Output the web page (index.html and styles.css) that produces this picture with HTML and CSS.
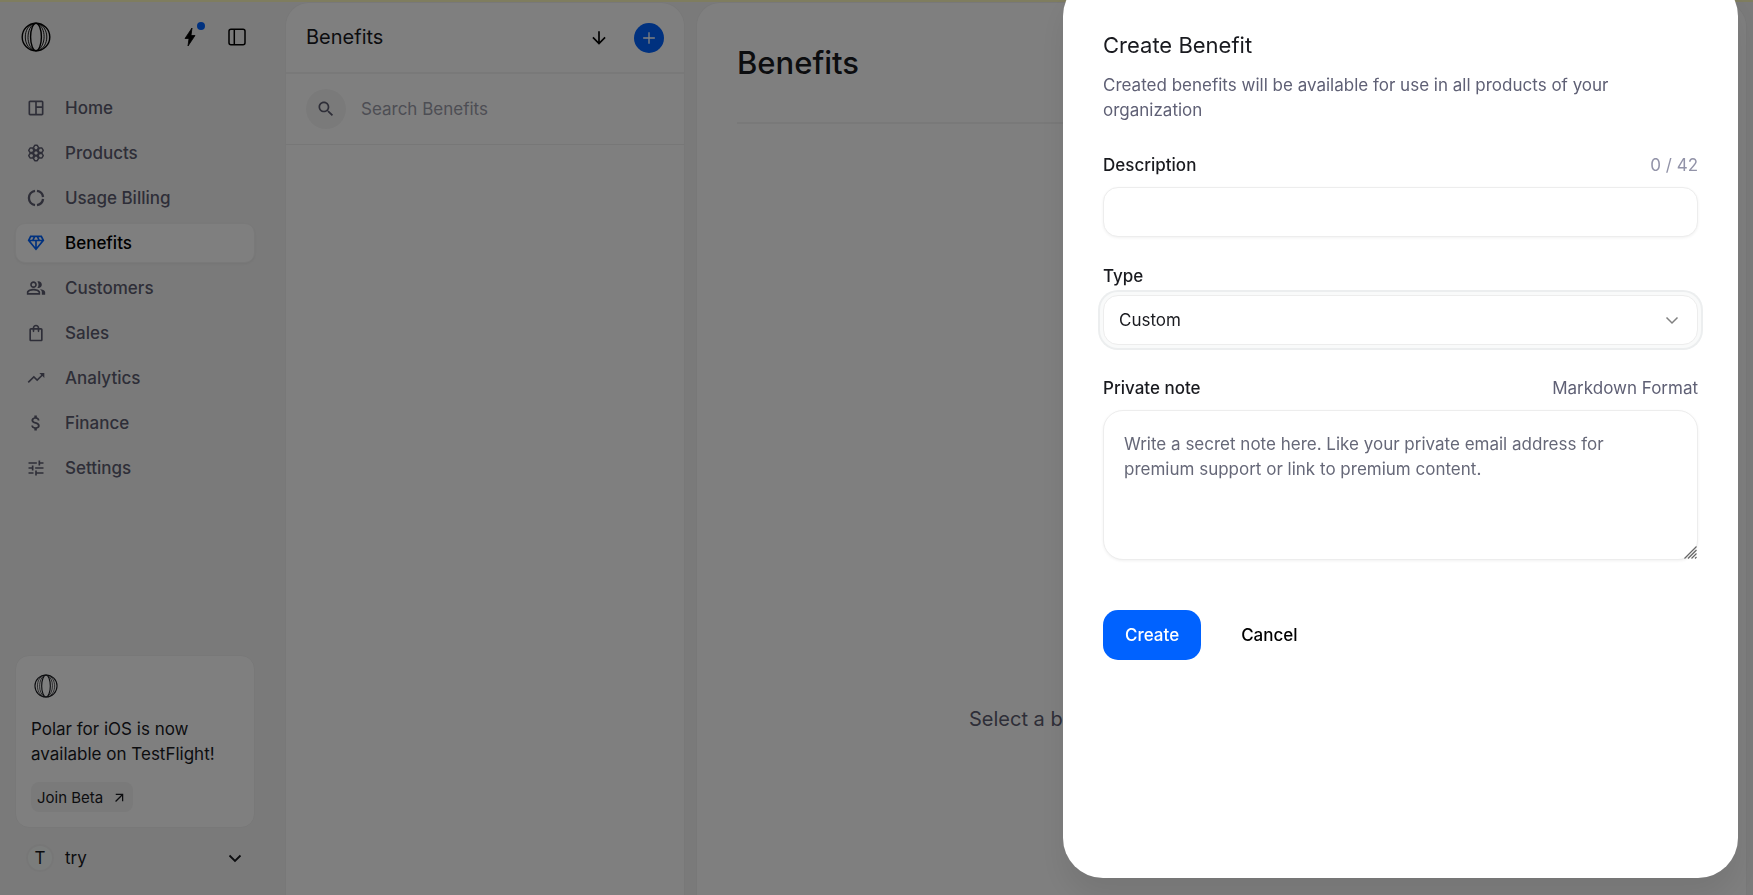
FILE: index.html
```html
<!DOCTYPE html>
<html lang="en">
<head>
<meta charset="utf-8">
<title>Benefits</title>
<link rel="stylesheet" href="styles.css">
</head>
<body>
<svg class="defs" aria-hidden="true">
  <symbol id="logo" viewBox="0 0 30 30">
    <g fill="none" stroke="currentColor">
      <circle cx="15" cy="15" r="13.8" stroke-width="1.4"/>
      <ellipse cx="15" cy="15" rx="5.4" ry="13.8" stroke-width="1.4"/>
      <path d="M12.500 1.600C7 3.500 4.300 9 4.300 15c0 5.500 2.400 11 8 13.500M13.500 1.300C9.500 3.500 7 9 7 15.500c0 5 2 10.500 6 12.900M17.500 1.500c5.500 2 8.300 8 8.300 13.500 0 6-3 11.600-8.300 13.600M17 1.600c3.800 2.400 6.100 7.400 6.100 13 0 6-2.500 11.500-6.500 14" stroke-width=".9"/>
    </g>
  </symbol>
</svg>
<div class="app">
  <nav class="sidebar">
    <div class="brand">
      <svg class="logo"><use href="#logo"/></svg>
      <div class="brand-actions">
        <button class="icon-button" aria-label="Notifications"><svg class="icon" viewBox="0 0 20 20"><path fill="currentColor" stroke="currentColor" stroke-width=".8" stroke-linejoin="round" d="M12 1 5 11.500h4L8 19l7-10.500h-4L12 1z"/></svg><span class="dot"></span></button>
        <button class="icon-button" aria-label="Toggle sidebar"><svg class="icon" viewBox="0 0 20 20" fill="none" stroke="currentColor" stroke-width="1.500"><rect x="2" y="2.300" width="16" height="15.500" rx="2"/><path d="M7.300 2.300v15.500"/></svg></button>
      </div>
    </div>
    <ul class="nav">
      <li><a href="#"><svg class="icon" viewBox="0 0 24 24"><path fill="currentColor" d="M19 3H5c-1.100 0-2 .9-2 2v14c0 1.100.9 2 2 2h14c1.100 0 2-.9 2-2V5c0-1.100-.9-2-2-2zM5 19V5h6v14H5zm14 0h-6v-7h6v7zm0-9h-6V5h6v5z"/></svg>Home</a></li>
      <li><a href="#"><svg class="icon" viewBox="0 0 24 24" fill="none" stroke="currentColor" stroke-width="1.800" stroke-linejoin="round"><path d="M10.500 2.800h3L15.100 5.500l-1.600 2.800h-3L8.900 5.500zM10.500 9.200h3l1.600 2.800-1.600 2.800h-3L8.900 12zM10.500 15.700h3l1.600 2.800-1.600 2.700h-3l-1.600-2.700zM4.900 6h3l1.600 2.800-1.600 2.700h-3L3.300 8.800zM4.900 12.500h3l1.600 2.700L7.900 18h-3l-1.600-2.800zM16.100 6h3l1.600 2.800-1.600 2.700h-3l-1.600-2.700zM16.100 12.500h3l1.600 2.700-1.600 2.800h-3l-1.600-2.800z"/></svg>Products</a></li>
      <li><a href="#"><svg class="icon" viewBox="0 0 24 24" fill="none" stroke="currentColor" stroke-width="2.800"><path d="M13.200 3.500a8.700 8.700 0 0 1 7.300 7.300M20.500 13.200a8.700 8.700 0 0 1-7.300 7.300M10.800 20.500a8.600 8.600 0 0 1 0-17"/></svg>Usage Billing</a></li>
      <li><a href="#" class="active" aria-current="page"><svg class="icon" viewBox="0 0 24 24"><path fill="currentColor" d="M19 3H5L2 9l10 12L22 9l-3-6zM9.620 8l1.500-3h1.760l1.500 3H9.620zM11 10v6.680L5.440 10H11zm2 0h5.560L13 16.680V10zm6.260-2h-2.650l-1.500-3h2.650l1.500 3zM6.240 5h2.650l-1.500 3H4.740l1.500-3z"/></svg>Benefits</a></li>
      <li><a href="#"><svg class="icon" viewBox="0 0 24 24"><path fill="currentColor" d="M16.670 13.130C18.040 14.060 19 15.320 19 17v3h4v-3c0-2.180-3.570-3.470-6.330-3.870zM15 12c2.210 0 4-1.790 4-4s-1.790-4-4-4c-.47 0-.91.1-1.330.24C14.500 5.270 15 6.580 15 8s-.5 2.730-1.330 3.760c.42.14.86.24 1.330.24zM9 12c2.210 0 4-1.790 4-4s-1.790-4-4-4-4 1.790-4 4 1.790 4 4 4zm0-6c1.100 0 2 .9 2 2s-.9 2-2 2-2-.9-2-2 .9-2 2-2zM9 13c-2.670 0-8 1.340-8 4v3h16v-3c0-2.660-5.330-4-8-4zm6 5H3v-.99C3.200 16.290 6.300 15 9 15s5.800 1.290 6 2v1z"/></svg>Customers</a></li>
      <li><a href="#"><svg class="icon" viewBox="0 0 24 24"><path fill="currentColor" d="M18 6h-2c0-2.210-1.790-4-4-4S8 3.790 8 6H6c-1.100 0-2 .9-2 2v12c0 1.100.9 2 2 2h12c1.100 0 2-.9 2-2V8c0-1.100-.9-2-2-2zm-6-2c1.100 0 2 .9 2 2h-4c0-1.100.9-2 2-2zm6 16H6V8h2v2c0 .55.45 1 1 1s1-.45 1-1V8h4v2c0 .55.45 1 1 1s1-.45 1-1V8h2v12z"/></svg>Sales</a></li>
      <li><a href="#"><svg class="icon" viewBox="0 0 24 24"><path fill="currentColor" d="m16 6 2.290 2.290-4.880 4.880-4-4L2 16.590 3.410 18l6-6 4 4 6.300-6.290L22 12V6z"/></svg>Analytics</a></li>
      <li><a href="#"><svg class="icon" viewBox="0 0 24 24"><path fill="currentColor" d="M11.800 10.900c-2.270-.59-3-1.200-3-2.150 0-1.090 1.010-1.850 2.700-1.850 1.780 0 2.440.85 2.500 2.100h2.210c-.07-1.720-1.120-3.300-3.210-3.810V3h-3v2.160c-1.940.42-3.500 1.680-3.500 3.610 0 2.310 1.910 3.460 4.700 4.130 2.500.6 3 1.480 3 2.410 0 .69-.49 1.790-2.700 1.790-2.060 0-2.870-.92-2.980-2.100h-2.200c.12 2.190 1.760 3.420 3.680 3.830V21h3v-2.150c1.950-.37 3.500-1.500 3.500-3.550 0-2.840-2.430-3.810-4.700-4.400z"/></svg>Finance</a></li>
      <li><a href="#"><svg class="icon" viewBox="0 0 24 24"><path fill="currentColor" d="M3 17v2h6v-2H3zM3 5v2h10V5H3zm10 16v-2h8v-2h-8v-2h-2v6h2zM7 9v2H3v2h4v2h2V9H7zm14 4v-2H11v2h10zm-6-4h2V7h4V5h-4V3h-2v6z"/></svg>Settings</a></li>
    </ul>
    <section class="promo">
      <svg class="promo-logo"><use href="#logo"/></svg>
      <p>Polar for iOS is now available on TestFlight!</p>
      <a href="#" class="promo-link">Join Beta <svg class="small-icon" viewBox="0 0 24 24"><path fill="currentColor" d="M6 6v2h8.590L5 17.590 6.410 19 16 9.410V18h2V6z"/></svg></a>
    </section>
    <button class="account">
      <span class="avatar">T</span><span class="account-name">try</span>
      <svg class="icon" viewBox="0 0 20 20" fill="none" stroke="currentColor" stroke-width="1.800"><path d="m4.500 7.500 5.500 5.500 5.500-5.500"/></svg>
    </button>
  </nav>
  <section class="panel list">
    <header class="list-header">
      <h2>Benefits</h2>
      <div class="list-actions">
        <button class="icon-button" aria-label="Sort"><svg class="icon" viewBox="0 0 24 24"><path fill="currentColor" d="m20 12-1.410-1.410L13 16.170V4h-2v12.170l-5.580-5.590L4 12l8 8z"/></svg></button>
        <button class="add" aria-label="Add benefit"><svg class="icon" viewBox="0 0 24 24"><path fill="currentColor" d="M19 12.800h-6.200V19h-1.600v-6.200H5v-1.600h6.200V5h1.600v6.200H19z"/></svg></button>
      </div>
    </header>
    <div class="search">
      <span class="search-icon"><svg class="icon" viewBox="0 0 24 24"><path fill="currentColor" d="M15.500 14h-.79l-.28-.27C15.410 12.590 16 11.110 16 9.500 16 5.910 13.090 3 9.500 3S3 5.910 3 9.500 5.910 16 9.500 16c1.610 0 3.090-.59 4.230-1.570l.27.28v.79l5 4.990L20.490 19l-4.990-5zm-6 0C7.010 14 5 11.990 5 9.500S7.010 5 9.500 5 14 7.010 14 9.500 11.990 14 9.500 14z"/></svg></span>
      <input type="text" placeholder="Search Benefits" aria-label="Search Benefits">
    </div>
  </section>
  <main class="panel main">
    <h1>Benefits</h1>
    <p class="empty">Select a benefit</p>
  </main>
</div>
<div class="overlay">
  <form class="sheet" role="dialog" aria-labelledby="sheet-title">
    <h2 id="sheet-title">Create Benefit</h2>
    <p class="intro">Created benefits will be available for use in all products of your organization</p>
    <div class="field">
      <div class="label-row"><label for="description">Description</label><span class="counter">0 / 42</span></div>
      <input id="description" class="control" type="text" maxlength="42">
    </div>
    <div class="field">
      <div class="label-row tight"><label for="type">Type</label></div>
      <div class="control-wrap">
        <select id="type" class="control focused"><option>Custom</option></select>
        <svg class="icon chevron" viewBox="0 0 20 20" fill="none" stroke="currentColor" stroke-width="1.500"><path d="m4.500 7.500 5.500 5.500 5.500-5.500"/></svg>
      </div>
    </div>
    <div class="field">
      <div class="label-row"><label for="note">Private note</label><span class="hint">Markdown Format</span></div>
      <div class="control-wrap">
        <textarea id="note" class="control" placeholder="Write a secret note here. Like your private email address for premium support or link to premium content."></textarea>
        <svg class="grip" viewBox="0 0 13 13" fill="none" stroke="currentColor" stroke-width="1.200"><path d="M.5 12.500l12-12M4 12.500l8.500-8.500M7.500 12.500l5-5M11 12.500l1.500-1.500"/></svg>
      </div>
    </div>
    <div class="buttons">
      <button type="button" class="primary">Create</button>
      <button type="button" class="ghost">Cancel</button>
    </div>
  </form>
</div>
</body>
</html>
```

FILE: styles.css
```css
* { box-sizing: border-box; }
body {
  margin: 0;
  height: 100vh;
  overflow: hidden;
  font: 17px/25px Inter, "Liberation Sans", sans-serif;
  color: #191a1f;
  background: #f5f5f5;
}
h1, h2, p, ul { margin: 0; padding: 0; font-weight: 400; }
button, input, select, textarea { font: inherit; color: inherit; border: 0; background: none; padding: 0; margin: 0; }
input::placeholder, textarea::placeholder { opacity: 1; }
a { color: inherit; text-decoration: none; }
svg { display: block; flex: none; }
.defs { display: none; }
.icon { width: 20px; height: 20px; }

.app { display: flex; height: 100%; border-top: 2px solid #fffbbe; padding-right: 6px; }
.sidebar { width: 285px; flex: none; display: flex; flex-direction: column; padding: 15px 30px 17px 15px; }
.brand { display: flex; align-items: center; justify-content: space-between; height: 40px; padding: 0 8px 0 6px; margin-bottom: 31px; }
.logo { width: 30px; height: 30px; color: #000; }
.brand-actions { display: flex; gap: 27px; }
.icon-button { position: relative; color: #000; }
.dot { position: absolute; top: -5px; right: -5px; width: 8px; height: 8px; border-radius: 50%; background: #0062ff; }

.nav { list-style: none; display: flex; flex-direction: column; gap: 5px; }
.nav a { display: flex; align-items: center; gap: 19px; height: 40px; padding: 0 10px; border: 1px solid transparent; border-radius: 10px; font-weight: 500; color: #5d5d70; }
.nav a.active { background: #fff; color: #000; border-color: #f2f2f2; box-shadow: 0 1px 3px rgba(0, 0, 0, .06); }
.active .icon { color: #0062ff; }

.promo { margin-top: auto; background: #fff; border: 1px solid #f0f0f0; border-radius: 14px; padding: 15px; }
.promo-logo { width: 24px; height: 24px; margin: 3px 3px 19px; }
.promo-link { display: flex; align-items: center; gap: 9px; width: fit-content; height: 30px; margin-top: 15px; padding: 0 6px; border-radius: 8px; background: #f5f5f5; font-size: 15px; }
.small-icon { width: 15px; height: 15px; }
.account { display: flex; align-items: center; width: 100%; height: 40px; margin-top: 10px; padding: 0 10px 0 11px; text-align: left; }
.avatar { width: 28px; height: 28px; border: 2px solid #efefef; border-radius: 50%; background: #f7faf9; text-align: center; line-height: 24px; }
.account-name { flex: 1; padding-left: 11px; }

.panel { background: #fff; border: 1px solid #f0f0f0; border-bottom: 0; border-radius: 24px 24px 0 0; }
.list { width: 400px; flex: none; margin-right: 11px; }
.list-header { display: flex; align-items: center; justify-content: space-between; height: 71px; padding: 0 20px; border-bottom: 2px solid #f2f2f2; }
.list-header h2 { font-size: 20px; }
.list-actions { display: flex; align-items: center; gap: 25px; }
.add { display: grid; place-items: center; width: 30px; height: 30px; border-radius: 50%; background: #0062ff; color: #fff; }
.search { display: flex; align-items: center; gap: 15px; height: 71px; padding: 0 20px; border-bottom: 1px solid #efefef; }
.search-icon { display: grid; place-items: center; width: 40px; height: 40px; border-radius: 50%; background: #f5f5f5; color: #5d5d70; }
.search input { flex: 1; min-width: 0; }
.search input::placeholder { color: #9b9ca9; }
.main { flex: 1; min-width: 0; display: flex; flex-direction: column; padding: 0 40px; }
.main h1 { font-size: 31px; line-height: 40px; font-weight: 500; padding: 40px 0 39px; border-bottom: 2px solid #f2f2f2; }
.empty { margin: auto 0 161px; padding-left: 232px; font-size: 20px; line-height: 30px; color: #5d5d70; }

.overlay { position: fixed; inset: 0; display: flex; align-items: stretch; justify-content: flex-end; background: rgba(0, 0, 0, .5); }
.sheet { width: 675px; margin: -24px 15px 17px 0; padding: 54px 40px 40px; border-radius: 40px; background: #fff; box-shadow: 0 20px 30px rgba(0, 0, 0, .08); }
.sheet h2 { font-size: 22px; line-height: 30px; margin-bottom: 13px; }
.intro { color: #5f6075; margin-bottom: 30px; }
.field { margin-bottom: 31px; }
.label-row { display: flex; justify-content: space-between; margin-bottom: 9px; }
.field:has(+ .field .tight) { margin-bottom: 27px; }
.label-row.tight { margin-bottom: 6px; }
label { font-weight: 500; }
.counter { color: #9293a8; }
.hint { color: #5f6075; }
.control { display: block; width: 100%; height: 50px; border: 1px solid #ededed; border-radius: 15px; padding: 0 15px; background: #fff; box-shadow: 0 1px 3px rgba(0, 0, 0, .06); outline: 0; }
.control-wrap { position: relative; }
select.control { appearance: none; }
.focused { box-shadow: 0 0 0 3px #f9fafa, 0 0 0 5px #eceeef; }
.chevron { position: absolute; right: 16px; top: 15px; color: #808080; pointer-events: none; }
textarea.control { height: 150px; border-radius: 20px; padding: 21px 20px; resize: vertical; }
textarea::-webkit-resizer { display: none; }
.grip { position: absolute; right: 1px; bottom: 1px; width: 13px; height: 13px; color: #666; pointer-events: none; }
textarea::placeholder { color: #666878; }
.buttons { display: flex; gap: 18px; padding-top: 19px; }
.buttons button { height: 50px; padding: 0 22px; border-radius: 15px; font-weight: 500; }
.primary { background: #0062ff; color: #fff; }
.ghost { color: #000; }
```
